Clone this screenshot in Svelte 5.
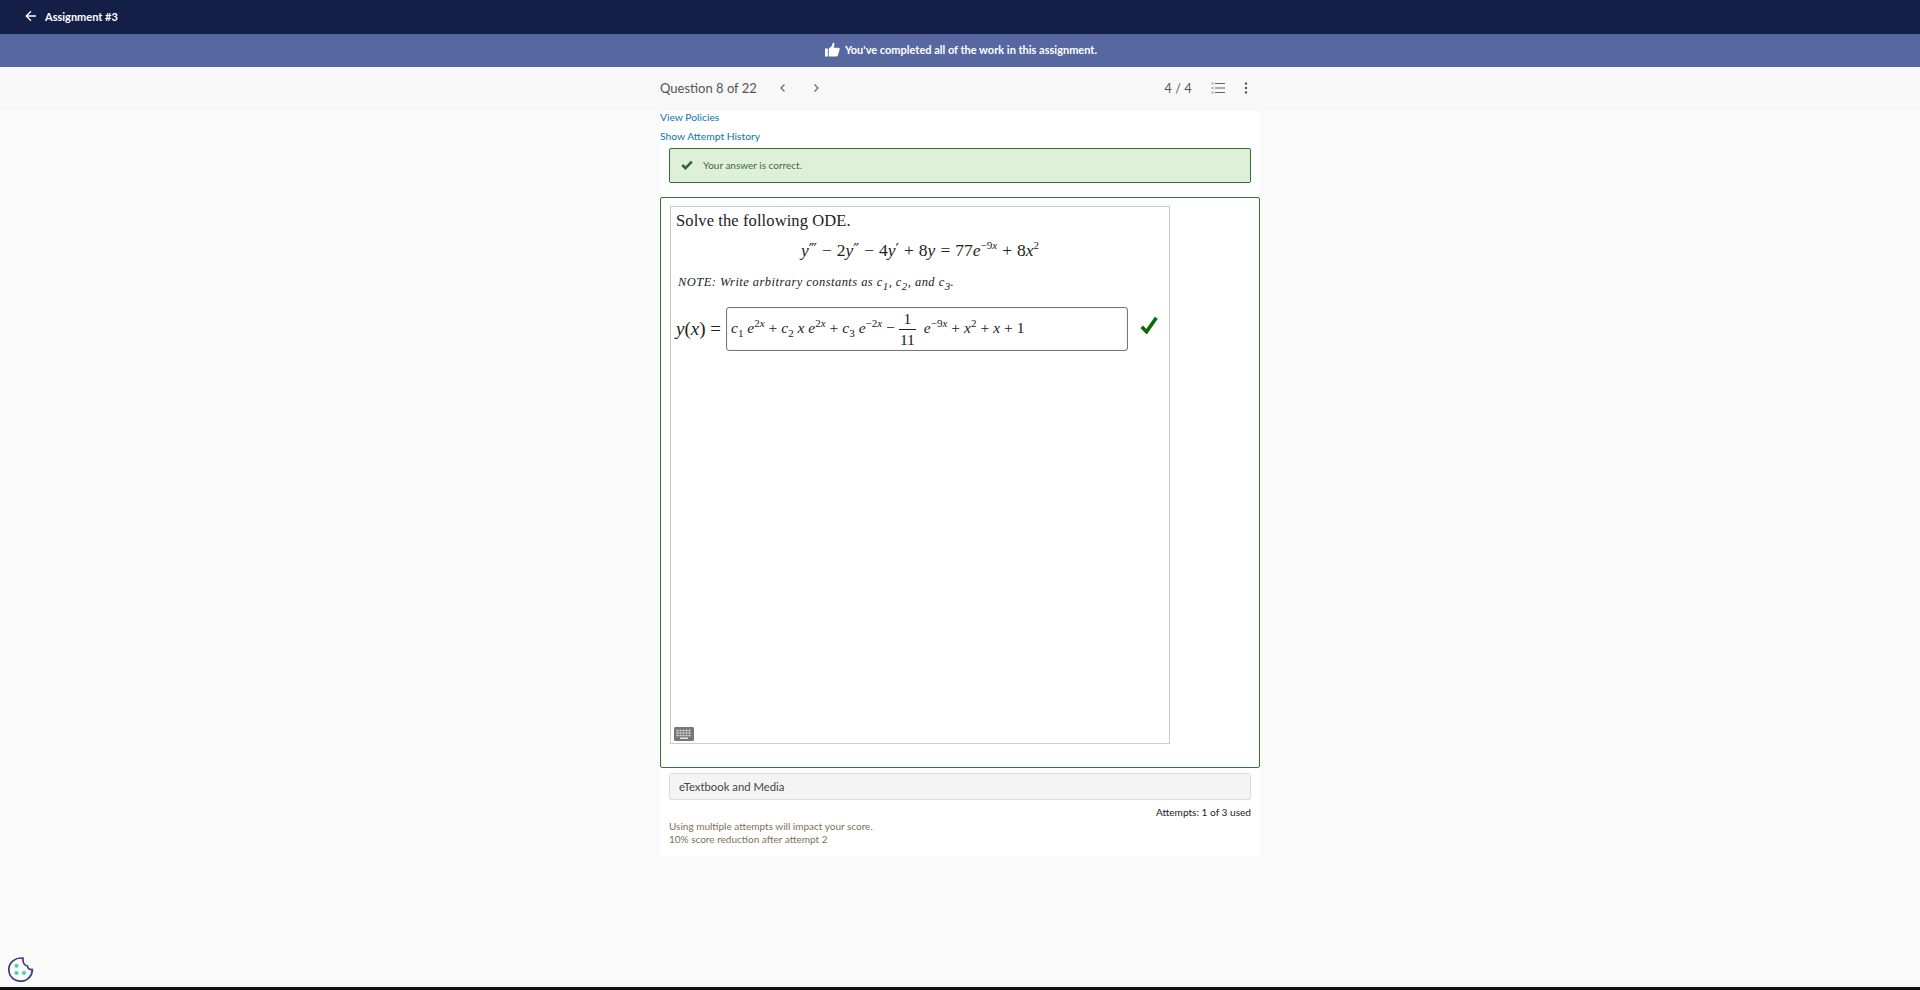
<script>
  const policies = ['View Policies', 'Show Attempt History'];
</script>

<div class="page">
  <header class="topbar">
    <svg class="back" viewBox="0 0 12 12" width="12" height="12" aria-hidden="true"><path d="M11 6H1.500M6 1.200 1.200 6 6 10.800" fill="none" stroke="#fff" stroke-width="1.300"/></svg>
    <span class="assignment">Assignment #3</span>
  </header>
  <div class="banner">
    <svg viewBox="0 0 16 15" width="15" height="15" aria-hidden="true"><path fill="#fff" d="M0 6.500h3V15H0zM4 6.600 7.400 3.400 8.400 0c1.600.2 2 1.600 1.400 3.400L9.200 5.600H14.200c1.200 0 1.800 1 1.400 2L13.800 13.400C13.500 14.400 12.800 15 11.800 15H4z"/></svg>
    <span>You've completed all of the work in this assignment.</span>
  </div>
  <nav class="subbar">
    <div class="subinner">
      <span class="qcount">Question 8 of 22</span>
      <svg class="chev first" viewBox="0 0 8 10" width="8" height="10" aria-hidden="true"><path d="M5.500 1.500 2 5l3.500 3.500" fill="none" stroke="#666" stroke-width="1.200"/></svg>
      <svg class="chev" viewBox="0 0 8 10" width="8" height="10" aria-hidden="true"><path d="M2.500 1.500 6 5 2.500 8.500" fill="none" stroke="#666" stroke-width="1.200"/></svg>
      <span class="score">4 / 4</span>
      <svg class="list" viewBox="0 0 14 12" width="14" height="12" aria-hidden="true"><path d="M4 1.500h10M4 6h10M4 10.500h10" stroke="#666" stroke-width="1.200"/><path d="M0.500 1.500h2M0.500 6h2M0.500 10.500h2" stroke="#888" stroke-width="1.800" stroke-dasharray="1 .5"/></svg>
      <svg class="kebab" viewBox="0 0 4 12" width="4" height="12" aria-hidden="true"><circle cx="2" cy="1.500" r="1.200" fill="#555"/><circle cx="2" cy="6" r="1.200" fill="#555"/><circle cx="2" cy="10.500" r="1.200" fill="#555"/></svg>
    </div>
  </nav>

  <main class="column">
    <div class="links">
      {#each policies as p}
        <a href="#top">{p}</a>
      {/each}
    </div>
    <div class="alert">
      <svg viewBox="0 0 12 10" width="12" height="10" aria-hidden="true"><path d="M1.200 5 4.500 8.200 10.800 1.600" fill="none" stroke="#2f6b2f" stroke-width="2.600"/></svg>
      <span>Your answer is correct.</span>
    </div>

    <section class="question">
      <div class="stage">
        <p class="solve">Solve the following ODE.</p>
        <div class="equation">
          <i>y</i><sup class="prime">′′′</sup><span class="op">−</span>2<i>y</i><sup class="prime">′′</sup><span class="op">−</span>4<i>y</i><sup class="prime">′</sup><span class="op">+</span>8<i>y</i><span class="op">=</span>77<i>e</i><sup>−9<i>x</i></sup><span class="op">+</span>8<i>x</i><sup>2</sup>
        </div>
        <p class="note">NOTE: Write arbitrary constants as <span>c<sub>1</sub></span>, <span>c<sub>2</sub></span>, and <span>c<sub>3</sub></span>.</p>
        <div class="answer">
          <span class="lhs"><i>y</i>(<i>x</i>) =</span>
          <div class="input">
            <div class="expr"><i>c</i><sub>1</sub> <i>e</i><sup>2<i>x</i></sup><span class="op">+</span><i>c</i><sub>2</sub> <i>x</i> <i>e</i><sup>2<i>x</i></sup><span class="op">+</span><i>c</i><sub>3</sub> <i>e</i><sup>−2<i>x</i></sup><span class="op">−</span><span class="frac"><span class="num">1</span><span class="den">11</span></span><i>e</i><sup>−9<i>x</i></sup><span class="op">+</span><i>x</i><sup>2</sup><span class="op">+</span><i>x</i><span class="op">+</span>1</div>
          </div>
          <svg class="tick" viewBox="0 0 16 16" width="18" height="18" aria-hidden="true"><path d="M1.500 9.500 5.800 14 14.500 1.500" fill="none" stroke="#0b6b0b" stroke-width="3.200"/></svg>
        </div>
        <div class="keyboard" aria-hidden="true">
          <svg viewBox="0 0 20 14" width="20" height="14"><rect width="20" height="14" rx="1.500" fill="#777"/><path d="M2.500 3.500h15M2.500 6h15M2.500 8.500h15" stroke="#ddd" stroke-width="1.300" stroke-dasharray="2 1"/><rect x="6" y="10.500" width="8" height="1.400" fill="#eee"/></svg>
        </div>
      </div>
    </section>

    <div class="media">eTextbook and Media</div>
    <div class="attempts">Attempts: 1 of 3 used</div>
    <div class="scorenote">
      <div>Using multiple attempts will impact your score.</div>
      <div>10% score reduction after attempt 2</div>
    </div>
  </main>

  <svg class="cookie" viewBox="0 0 26 26" width="26" height="26" aria-hidden="true">
    <path d="M15 1.200C8 0 .8 5 .8 12.500.8 19.500 6 24.200 12.500 24.200 19 24.200 24.500 19 24.300 12.500 21.500 12.800 19.800 11.500 19.500 9 16.800 9 14.500 6 15 1.200z" fill="none" stroke="#3d3a7c" stroke-width="1.700"/>
    <circle cx="8.500" cy="8.700" r="2" fill="#3fd6a0"/><circle cx="8.500" cy="16" r="2" fill="#3fd6a0"/><circle cx="16" cy="16" r="2" fill="#3fd6a0"/>
  </svg>
  <div class="blackbar"></div>
</div>

<style>
  :global(body) { margin: 0; background: #fafafa; }
  .page { height: 990px; display: flex; flex-direction: column; position: relative; overflow: hidden; font-family: Lato, "Liberation Sans", sans-serif; }
  .topbar { height: 34px; box-sizing: border-box; padding: 0 0 2px 25px; background: #131f47; display: flex; align-items: center; gap: 8px; color: #fff; flex: none; }
  .assignment { font-size: 11px; font-weight: 700; }
  .banner { height: 33px; box-sizing: border-box; padding: 0 0 2px 2px; background: #56689f; color: #fff; display: flex; align-items: center; justify-content: center; gap: 5px; font-size: 11px; font-weight: 700; flex: none; }
  .subbar { height: 44px; background: #f8f8f8; flex: none; }
  .subinner { width: 600px; margin: 0 auto; height: 100%; box-sizing: border-box; padding-bottom: 2px; display: flex; align-items: center; color: #555; }
  .qcount { font-size: 13px; width: 119px; }
  .chev.first { margin-right: 25px; }
  .score { margin-left: auto; font-size: 12.500px; margin-right: 19px; color: #555; letter-spacing: .2px; }
  .list { margin-right: 19px; }
  .kebab { margin-right: 12px; }
  .column { width: 600px; height: 745px; margin: 0 auto; background: #fff; box-sizing: border-box; flex: none; }
  .links { display: flex; flex-direction: column; align-items: flex-start; margin-top: -3px; padding-bottom: 3px; }
  .links a { font-size: 10.300px; line-height: 19px; color: #0e76a8; text-decoration: none; height: 19px; }
  .alert { margin: -1px 9px 0; height: 35px; box-sizing: border-box; padding: 0 0 2px 11px; border: 1px solid #2f6f32; border-radius: 2px; background: #dff0d8; display: flex; align-items: center; gap: 10px; color: #3d6b3d; font-size: 10px; }
  .question { margin-top: 14px; height: 571px; box-sizing: border-box; border: 1px solid #2f7a33; border-radius: 2px; padding: 8px 9px; }
  .stage { width: 500px; height: 538px; box-sizing: border-box; border: 1px solid #ccc; padding: 4px 5px; position: relative; font-family: "Liberation Serif", serif; color: #222; display: flex; flex-direction: column; }
  .solve { margin: 0; font-size: 16.500px; line-height: 20px; letter-spacing: .1px; }
  .equation { margin-top: 9px; text-align: center; font-size: 17.500px; line-height: 20px; }
  .op { margin: 0 5px; }
  .prime { font-family: "DejaVu Sans", sans-serif; font-size: 15px; letter-spacing: -1px; vertical-align: 1px; margin-right: 1px; }
  sup { font-size: 11px; line-height: 0; }
  sub { font-size: 11px; line-height: 0; }
  .note { margin: 14px 0 0; font-style: italic; font-size: 12.500px; line-height: 16px; letter-spacing: .45px; padding-left: 2px; }
  .answer { margin-top: 17px; display: flex; align-items: center; }
  .lhs { font-size: 19px; width: 50px; flex: none; white-space: nowrap; }
  .input { width: 402px; height: 44px; box-sizing: border-box; border: 1px solid #777; border-radius: 3px; display: flex; align-items: center; padding-left: 4px; font-size: 15.500px; box-shadow: inset 0 0 1px #aaa; }
  .expr { white-space: pre; }
  .input .op { margin: 0 4px; }
  .frac { display: inline-flex; flex-direction: column; align-items: center; vertical-align: middle; margin: 0 9px 0 1px; line-height: 16px; }
  .num { border-bottom: 1px solid #222; padding: 0 1px 2px; width: 100%; text-align: center; }
  .den { padding-top: 2px; }
  .tick { margin: -8px 0 0 12px; }
  .keyboard { position: absolute; left: 3px; bottom: 2px; line-height: 0; }
  .media { margin: 5px 9px 0; height: 27px; box-sizing: border-box; padding: 0 0 1px 9px; border: 1px solid #ddd; border-radius: 2px; background: #f4f4f4; display: flex; align-items: center; font-size: 11.300px; color: #444; }
  .attempts { margin: 6px 9px 0; text-align: right; font-size: 10.100px; line-height: 13px; color: #222; }
  .scorenote { margin: 1px 9px 0; font-size: 10px; line-height: 12.500px; color: #80705a; }
  .cookie { position: absolute; left: 8px; bottom: 7px; }
  .blackbar { position: absolute; left: 0; right: 0; bottom: 0; height: 3px; background: #111; }
</style>
